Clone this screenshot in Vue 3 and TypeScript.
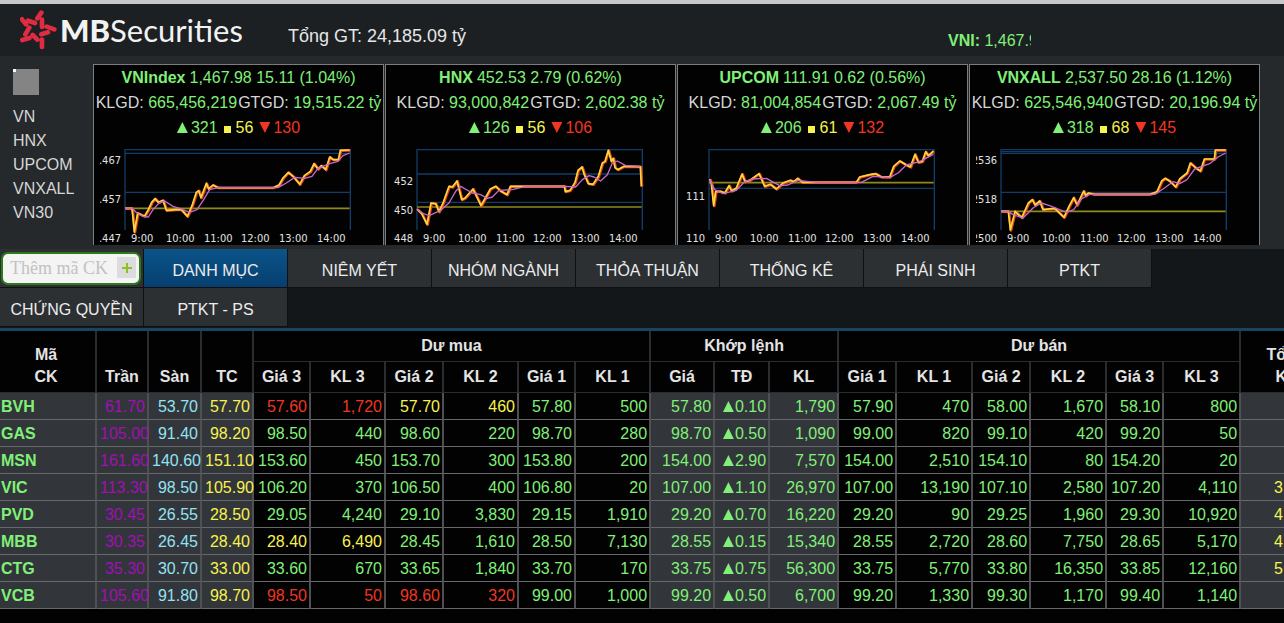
<script setup lang="ts">
import { ref } from 'vue'

interface Market {
  name: string
  index: string
  volume: string
  value: string
  up: number
  flat: number
  down: number
  grid: number[]
  reference: number
  labels: { text: string; y: number }[]
  price: string
  average: string
}

const markets: Market[] = [
  {
    name: 'VNIndex', index: '1,467.98 15.11 (1.04%)', volume: '665,456,219', value: '19,515.22 tỷ',
    up: 321, flat: 56, down: 130, grid: [13, 130], reference: 178,
    labels: [{ text: '.467', y: 100 }, { text: '.457', y: 139 }, { text: '.447', y: 178 }],
    price: '0,178 21,178 28,249 38,192 58,202 70,182 80,160 90,149 100,160 114,154 124,184 154,182 169,182 187,202 201,170 214,130 221,125 228,146 244,103 251,120 264,108 279,116 444,116 462,108 474,87 490,70 504,82 524,106 538,80 556,67 567,44 579,60 589,50 602,62 614,24 624,32 640,32 646,4 674,3',
    average: '0,178 21,178 36,192 54,202 70,204 84,182 102,162 119,156 144,172 164,178 194,190 216,182 236,152 254,122 279,116 459,116 484,102 509,85 539,88 561,82 579,58 614,44 639,37 654,20 674,12',
  },
  {
    name: 'HNX', index: '452.53 2.79 (0.62%)', volume: '93,000,842', value: '2,602.38 tỷ',
    up: 126, flat: 56, down: 106, grid: [75, 160], reference: 174,
    labels: [{ text: '452', y: 121 }, { text: '450', y: 150 }, { text: '448', y: 178 }],
    price: '0,180 14,194 30,226 42,162 56,164 66,188 78,162 96,112 106,114 120,96 134,152 144,147 168,120 192,170 220,120 236,112 252,127 270,137 280,112 442,112 445,128 459,124 474,100 483,64 495,54 502,77 514,104 528,106 544,82 556,42 564,37 574,4 583,37 589,28 594,56 602,62 621,52 670,53 673,112',
    average: '0,180 16,192 36,200 71,184 96,162 116,127 131,112 166,132 191,137 211,148 226,144 246,124 286,122 326,112 446,112 476,114 496,92 516,80 531,84 551,96 571,77 586,42 601,36 626,50 670,52',
  },
  {
    name: 'UPCOM', index: '111.91 0.62 (0.56%)', volume: '81,004,854', value: '2,067.49 tỷ',
    up: 206, flat: 61, down: 132, grid: [118], reference: 101,
    labels: [{ text: '111', y: 136 }, { text: '110', y: 178 }],
    price: '2,90 7,104 14,170 20,127 34,127 47,132 60,110 68,126 82,117 99,75 108,98 122,94 150,74 167,112 184,106 202,120 222,102 244,94 254,98 266,88 280,100 442,100 452,84 482,77 500,74 517,84 542,84 554,52 572,36 592,48 604,54 618,16 628,40 640,37 650,8 658,20 673,6',
    average: '2,92 17,122 42,134 82,124 107,98 132,90 172,88 212,110 237,108 267,94 322,100 457,100 492,82 542,86 567,72 592,48 632,38 673,16',
  },
  {
    name: 'VNXALL', index: '2,537.50 28.16 (1.12%)', volume: '625,546,940', value: '20,196.94 tỷ',
    up: 318, flat: 68, down: 145, grid: [8, 13, 130], reference: 187,
    labels: [{ text: '2536', y: 100 }, { text: '2518', y: 139 }, { text: '2500', y: 178 }],
    price: '0,187 22,187 28,243 42,187 62,206 82,162 94,152 102,168 116,156 126,182 161,178 189,205 204,172 218,146 228,168 248,126 254,140 262,132 280,136 446,136 468,128 482,96 492,88 506,96 524,114 536,90 558,72 568,42 586,58 598,66 610,30 640,30 643,3 674,3',
    average: '0,187 22,187 36,197 66,207 96,177 121,162 146,170 196,190 218,182 241,150 266,136 461,136 486,120 516,98 536,104 558,92 581,60 626,44 651,24 674,12',
  },
]

const hours = [
  { text: '9:00', x: 38 },
  { text: '10:00', x: 73 },
  { text: '11:00', x: 111 },
  { text: '12:00', x: 148 },
  { text: '13:00', x: 186 },
  { text: '14:00', x: 224 },
]

const indexNames = ['VN', 'HNX', 'UPCOM', 'VNXALL', 'VN30']
const tabs = [
  'DANH MỤC', 'NIÊM YẾT', 'NHÓM NGÀNH', 'THỎA THUẬN', 'THỐNG KÊ',
  'PHÁI SINH', 'PTKT', 'CHỨNG QUYỀN', 'PTKT - PS',
]
const activeTab = ref('DANH MỤC')
const newSymbol = ref('')

const columnWidths = [97, 52, 53, 52, 57, 75, 58, 75, 57, 75, 64, 55, 69, 58, 76, 58, 76, 57, 77, 92]
const subHeads = [
  'Giá 3', 'KL 3', 'Giá 2', 'KL 2', 'Giá 1', 'KL 1', 'Giá', 'TĐ', 'KL',
  'Giá 1', 'KL 1', 'Giá 2', 'KL 2', 'Giá 3', 'KL 3',
]

interface Quote {
  symbol: string
  ceiling: string
  floor: string
  reference: string
  bids: string[]
  match: string[]
  asks: string[]
  total: string
}

function quote(line: string, total = ''): Quote {
  const f = line.split(' ')
  return {
    symbol: f[0], ceiling: f[1], floor: f[2], reference: f[3],
    bids: f.slice(4, 10), match: f.slice(10, 13), asks: f.slice(13, 19), total,
  }
}

const quotes: Quote[] = [
  quote('BVH 61.70 53.70 57.70 57.60 1,720 57.70 460 57.80 500 57.80 0.10 1,790 57.90 470 58.00 1,670 58.10 800'),
  quote('GAS 105.00 91.40 98.20 98.50 440 98.60 220 98.70 280 98.70 0.50 1,090 99.00 820 99.10 420 99.20 50'),
  quote('MSN 161.60 140.60 151.10 153.60 450 153.70 300 153.80 200 154.00 2.90 7,570 154.00 2,510 154.10 80 154.20 20'),
  quote('VIC 113.30 98.50 105.90 106.20 370 106.50 400 106.80 20 107.00 1.10 26,970 107.00 13,190 107.10 2,580 107.20 4,110', '3'),
  quote('PVD 30.45 26.55 28.50 29.05 4,240 29.10 3,830 29.15 1,910 29.20 0.70 16,220 29.20 90 29.25 1,960 29.30 10,920', '4'),
  quote('MBB 30.35 26.45 28.40 28.40 6,490 28.45 1,610 28.50 7,130 28.55 0.15 15,340 28.55 2,720 28.60 7,750 28.65 5,170', '4'),
  quote('CTG 35.30 30.70 33.00 33.60 670 33.65 1,840 33.70 170 33.75 0.75 56,300 33.75 5,770 33.80 16,350 33.85 12,160', '5'),
  quote('VCB 105.60 91.80 98.70 98.50 50 98.60 320 99.00 1,000 99.20 0.50 6,700 99.20 1,330 99.30 1,170 99.40 1,140'),
]

// A volume takes the colour of the price on its left.
function tone(cells: string[], i: number, reference: string): string {
  const diff = parseFloat(cells[i - (i % 2)]) - parseFloat(reference)
  return diff > 0 ? 'green' : diff < 0 ? 'red' : 'yellow'
}
</script>

<template>
  <div class="board">
    <header class="top">
      <div class="logo">
        <svg width="38" height="42" viewBox="18 12 114 126" aria-hidden="true">
          <path
            d="M82 23L70 40M24 43L36 58M42 47L63 54M84 44V66M98 65L121 73M82 88L102 82M46 68L34 88M25 105L46 99M56 90L70 104M84 104V126"
            stroke="#df2c42" stroke-width="14" stroke-linecap="round" fill="none"
          />
        </svg>
        <span class="brand"><b>MB</b>Securities</span>
      </div>
      <span class="turnover">Tổng GT: 24,185.09 tỷ</span>
      <div class="ticker"><b>VNI:</b> 1,467.98</div>
    </header>

    <section class="indices">
      <aside class="side">
        <span class="thumb"></span>
        <ul>
          <li v-for="n in indexNames" :key="n">{{ n }}</li>
        </ul>
      </aside>
      <div class="panels">
        <article v-for="m in markets" :key="m.name" class="panel">
          <p class="green"><b>{{ m.name }}</b> {{ m.index }}</p>
          <p class="volume">
            <span>KLGD: <span class="green">{{ m.volume }}</span></span>
            <span>GTGD: <span class="green">{{ m.value }}</span></span>
          </p>
          <p class="counts">
            <span class="count green"><i class="tri"></i>{{ m.up }}</span>
            <span class="count yellow flat"><i class="sq"></i>{{ m.flat }}</span>
            <span class="count red"><i class="tri down"></i>{{ m.down }}</span>
          </p>
          <svg class="chart" width="278" height="105" viewBox="7 76 278 105">
            <svg x="32" y="85" width="226" height="81" viewBox="0 0 678 243" overflow="visible">
              <path d="M0 243V2H676V243" class="frame" />
              <path v-for="g in m.grid" :key="g" :d="`M0 ${g}H676`" class="frame" />
              <path :d="`M0 ${m.reference}H674`" class="ref-line" />
              <polyline :points="m.price" class="price-shade" transform="translate(2 1)" />
              <polyline :points="m.price" class="price-line" />
              <polyline :points="m.average" class="avg-line" />
            </svg>
            <text v-for="l in m.labels" :key="l.text" x="28" :y="l.y" text-anchor="end">{{ l.text }}</text>
            <text v-for="h in hours" :key="h.text" :x="h.x" y="178">{{ h.text }}</text>
          </svg>
        </article>
      </div>
    </section>

    <nav class="tabs">
      <form class="search" @submit.prevent>
        <input v-model="newSymbol" type="text" placeholder="Thêm mã CK" aria-label="Thêm mã CK" />
        <button type="submit" aria-label="Thêm">
          <svg width="12" height="12" viewBox="0 0 12 12"><path d="M6 1V11M1 6H11" stroke="#8cc220" stroke-width="2" /></svg>
        </button>
      </form>
      <button
        v-for="t in tabs" :key="t" type="button" class="tab"
        :class="{ active: t === activeTab }" @click="activeTab = t"
      >{{ t }}</button>
    </nav>

    <div class="quotes">
      <table>
        <colgroup>
          <col v-for="(w, i) in columnWidths" :key="i" :style="{ width: w + 'px' }" />
        </colgroup>
        <thead>
          <tr>
            <th rowspan="2" class="symbol-head">Mã<br />CK</th>
            <th rowspan="2">Trần</th>
            <th rowspan="2">Sàn</th>
            <th rowspan="2">TC</th>
            <th colspan="6">Dư mua</th>
            <th colspan="3">Khớp lệnh</th>
            <th colspan="6">Dư bán</th>
            <th rowspan="2">Tổng<br />KL</th>
          </tr>
          <tr>
            <th v-for="(h, i) in subHeads" :key="i">{{ h }}</th>
          </tr>
        </thead>
        <tbody>
          <tr v-for="q in quotes" :key="q.symbol">
            <td class="shade symbol green">{{ q.symbol }}</td>
            <td class="shade purple">{{ q.ceiling }}</td>
            <td class="shade cyan">{{ q.floor }}</td>
            <td class="shade yellow">{{ q.reference }}</td>
            <td v-for="(c, i) in q.bids" :key="'b' + i" :class="tone(q.bids, i, q.reference)">{{ c }}</td>
            <td class="shade green">{{ q.match[0] }}</td>
            <td class="shade green"><i class="tri"></i>{{ q.match[1] }}</td>
            <td class="shade green">{{ q.match[2] }}</td>
            <td v-for="(c, i) in q.asks" :key="'a' + i" :class="tone(q.asks, i, q.reference)">{{ c }}</td>
            <td class="shade yellow total">{{ q.total }}</td>
          </tr>
        </tbody>
      </table>
    </div>
  </div>
</template>

<style>
body {
  margin: 0;
  background: #020202;
}
</style>

<style scoped>
.board {
  font-family: "Liberation Sans", Arial, sans-serif;
  font-size: 16px;
  color: #d6d6d6;
  overflow: hidden;
}

.green { color: #80f078; }
.yellow { color: #f6f250; }
.red { color: #f03622; }
.cyan { color: #92e2f4; }
.purple { color: #a010b4; }

.top {
  display: flex;
  align-items: center;
  height: 52px;
  padding-left: 20px;
  border-top: 4px solid #c8c8c8;
  background: #1c2022;
}

.logo {
  display: flex;
  align-items: center;
  gap: 2px;
  width: 268px;
}

.brand {
  font-family: Lato, sans-serif;
  font-size: 31px;
  line-height: 40px;
  color: #f2f2f2;
}

.brand b { font-weight: 900; }

.turnover {
  padding-top: 12px;
  font-size: 18px;
  color: #e6e6e6;
  white-space: nowrap;
}

.ticker {
  width: 83px;
  margin: 0 253px 0 auto;
  padding-top: 22px;
  overflow: hidden;
  white-space: nowrap;
  color: #80f078;
}

.indices {
  display: flex;
  padding: 8px 24px 4px 0;
  background: #25292c;
}

.side {
  flex: none;
  width: 80px;
  padding: 5px 0 0 13px;
}

.thumb {
  display: block;
  width: 26px;
  height: 26px;
  background: linear-gradient(#fff, #fff) 0 0 / 3px 3px no-repeat #848484;
}

.side ul {
  margin: 10px 0 0;
  padding: 0;
  list-style: none;
  line-height: 24px;
}

.panels {
  display: flex;
  flex: 1;
  gap: 1px;
  min-width: 0;
}

.panel {
  flex: 1;
  min-width: 0;
  overflow: hidden;
  border: 1px solid #7a7c7e;
  border-bottom: 0;
  background: #020202;
}

.panel p {
  display: flex;
  justify-content: center;
  gap: 4px;
  margin: 0;
  line-height: 25px;
  white-space: nowrap;
}

.panel .volume { gap: 1px; }
.panel .counts { gap: 6px; }

.count {
  display: flex;
  align-items: center;
  gap: 2px;
}

.flat { gap: 5px; }

.tri {
  display: inline-block;
  width: 11px;
  height: 11px;
  margin-right: 1px;
  background: currentColor;
  clip-path: polygon(50% 0, 100% 100%, 0 100%);
}

.tri.down { clip-path: polygon(0 0, 100% 0, 50% 100%); }

.sq {
  width: 7px;
  height: 7px;
  margin-top: 3px;
  background: currentColor;
}

.chart {
  display: block;
  margin-left: 6px;
}

.chart text {
  font-family: "DejaVu Sans Condensed", "Noto Sans", sans-serif;
  font-size: 11px;
  fill: #e2e2e2;
}

.frame {
  fill: none;
  stroke: #123c68;
  stroke-width: 4;
}

.ref-line {
  stroke: #8f8a1c;
  stroke-width: 5;
}

.price-shade,
.price-line,
.avg-line {
  fill: none;
  stroke-linejoin: round;
}

.price-shade {
  stroke: #e0401c;
  stroke-width: 8;
}

.price-line {
  stroke: #fbd83a;
  stroke-width: 5;
}

.avg-line {
  stroke: #c868c8;
  stroke-width: 4;
}

.tabs {
  display: flex;
  flex-wrap: wrap;
  padding-bottom: 1px;
  border-bottom: 3px solid #1a4464;
  background: #13171a;
}

.search,
.tab {
  box-sizing: border-box;
  width: 144px;
  height: 39px;
  border: solid #0e1113;
  border-width: 0 1px 1px 0;
  background: #2c3033;
}

.tab {
  padding: 6px 0 0;
  font: inherit;
  color: #ececec;
  white-space: nowrap;
}

.tab.active { background: linear-gradient(#0b5489, #063f6f); }

.search {
  display: flex;
  align-items: center;
  position: relative;
  padding: 0 2px 0 1px;
}

.search input {
  box-sizing: border-box;
  width: 100%;
  height: 33px;
  padding: 0 26px 0 7px;
  border: 2px solid #2c7a1c;
  border-radius: 7px;
  background: #f4f4f4;
  font: 18px "Liberation Serif", "Times New Roman", serif;
  color: #333;
}

.search input::placeholder { color: #c2c2c2; opacity: 1; }

.search button {
  position: absolute;
  right: 7px;
  top: 8px;
  display: grid;
  place-items: center;
  width: 19px;
  height: 21px;
  padding: 0;
  border: 0;
  background: #dcdcdc;
}

.quotes { overflow: hidden; }

table {
  width: 1333px;
  table-layout: fixed;
  border-collapse: separate;
  border-spacing: 0;
}

th {
  box-sizing: border-box;
  height: 31px;
  padding: 0 0 4px;
  border: solid #2a2d30;
  border-width: 0 2px 1px 0;
  line-height: 22px;
  vertical-align: bottom;
  color: #e4e4e4;
  white-space: nowrap;
}

.symbol-head { padding-right: 3px; }

td {
  box-sizing: border-box;
  height: 27px;
  padding: 1px 2px 0 3px;
  border-right: 2px solid #4e5053;
  border-bottom: 1px solid #66686b;
  line-height: 25px;
  text-align: right;
  white-space: nowrap;
}

.shade { background: #323539; }

.symbol {
  padding-left: 1px;
  text-align: left;
  font-weight: bold;
}

.total {
  padding-left: 33px;
  text-align: left;
}
</style>
